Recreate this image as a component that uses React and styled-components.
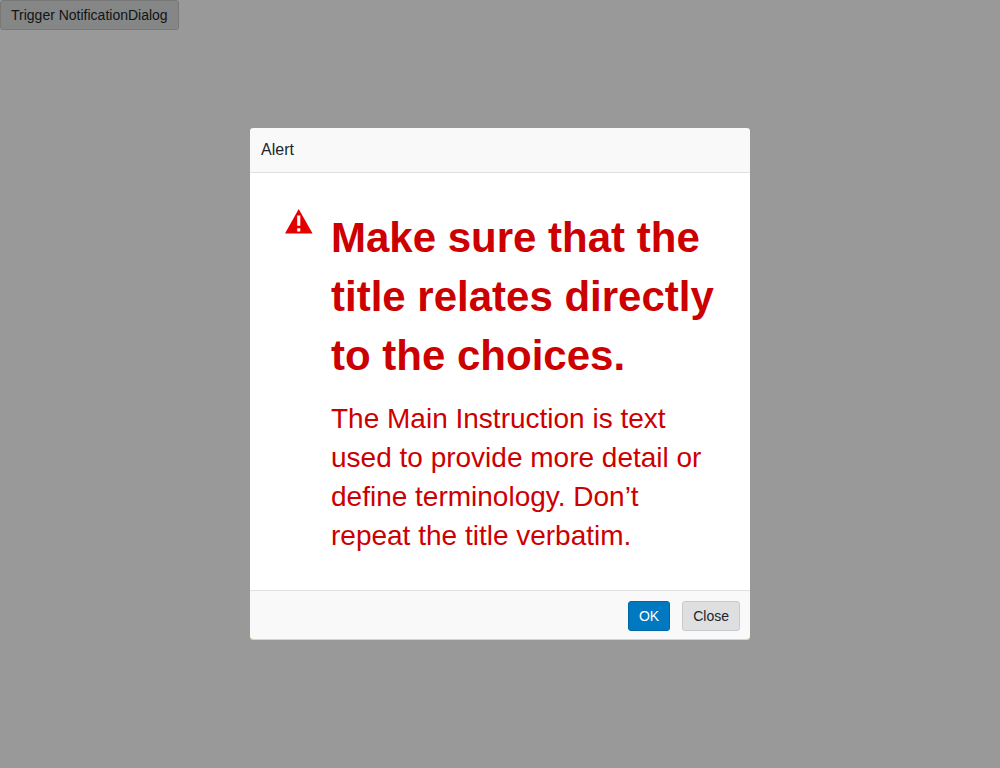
import React from "react";
import styled, { createGlobalStyle, css } from "styled-components";

const GlobalStyle = createGlobalStyle`
  *, *::before, *::after { box-sizing: border-box; }
  body {
    margin: 0;
    background: #fff;
    color: #212529;
    font-family: "Liberation Sans", Arial, sans-serif;
    font-size: 14px;
    line-height: 20px;
  }
`;

const variants = {
  secondary: css`
    background: #dedfe0;
    border-color: #c8c9ca;
    color: #212529;
  `,
  primary: css`
    background: #0079c1;
    border-color: #0067a5;
    color: #fff;
  `,
};

const Button = styled.button`
  display: inline-block;
  height: 30px;
  margin: 0;
  padding: 0 10px;
  border: 1px solid;
  border-radius: 3px;
  font: inherit;
  line-height: 28px;
  white-space: nowrap;
  cursor: pointer;
  ${({ $variant = "secondary" }) => variants[$variant]}
`;

const Backdrop = styled.div`
  position: fixed;
  inset: 0;
  display: flex;
  align-items: center;
  justify-content: center;
  background: rgba(0, 0, 0, 0.4);
`;

const Dialog = styled.section`
  width: 100%;
  max-width: 500px;
  padding-bottom: 1px;
  border-radius: 3px;
  background: #dcdba6;
`;

const Header = styled.header`
  padding: 10px 11px;
  border-bottom: 1px solid #dedfe0;
  border-radius: 4px 4px 0 0;
  background: #f9f9f9;
`;

const HeaderTitle = styled.h1`
  margin: 0;
  font-size: 16px;
  font-weight: 400;
  line-height: 24px;
`;

const Body = styled.div`
  display: flex;
  align-items: flex-start;
  gap: 18px;
  padding: 35px;
  background: #fff;
`;

const Icon = styled.svg`
  flex: none;
  width: 28px;
  height: 28px;
  fill: #e50000;
`;

const Message = styled.div`
  flex: 1;
  min-width: 0;
  color: #c00;
`;

const MessageTitle = styled.h2`
  margin: 0 0 14px;
  font-size: 42px;
  font-weight: 700;
  line-height: 59px;
`;

const MessageText = styled.p`
  margin: 0;
  font-size: 28px;
  line-height: 39px;
`;

const Footer = styled.footer`
  display: flex;
  justify-content: flex-end;
  gap: 12px;
  padding: 10px 10px 8px;
  border-top: 1px solid #dedfe0;
  border-radius: 0 0 4px 4px;
  background: #f9f9f9;
`;

function AlertIcon() {
  return (
    <Icon viewBox="0 0 28 28" aria-hidden="true">
      <path
        fillRule="evenodd"
        d="M13.7 1 L27.6 25.6 H0 Z M12.2 7.4 V17.8 H15.3 V7.4 Z M12.2 20.3 V23.4 H15.3 V20.3 Z"
      />
    </Icon>
  );
}

export default function App() {
  return (
    <>
      <GlobalStyle />
      <Button type="button">Trigger NotificationDialog</Button>
      <Backdrop>
        <Dialog role="alertdialog" aria-modal="true" aria-labelledby="dialog-title" aria-describedby="dialog-message">
          <Header>
            <HeaderTitle id="dialog-title">Alert</HeaderTitle>
          </Header>
          <Body>
            <AlertIcon />
            <Message id="dialog-message">
              <MessageTitle>Make sure that the title relates directly to the choices.</MessageTitle>
              <MessageText>
                The Main Instruction is text used to provide more detail or define terminology. Don’t repeat the title
                verbatim.
              </MessageText>
            </Message>
          </Body>
          <Footer>
            <Button type="button" $variant="primary">OK</Button>
            <Button type="button">Close</Button>
          </Footer>
        </Dialog>
      </Backdrop>
    </>
  );
}
